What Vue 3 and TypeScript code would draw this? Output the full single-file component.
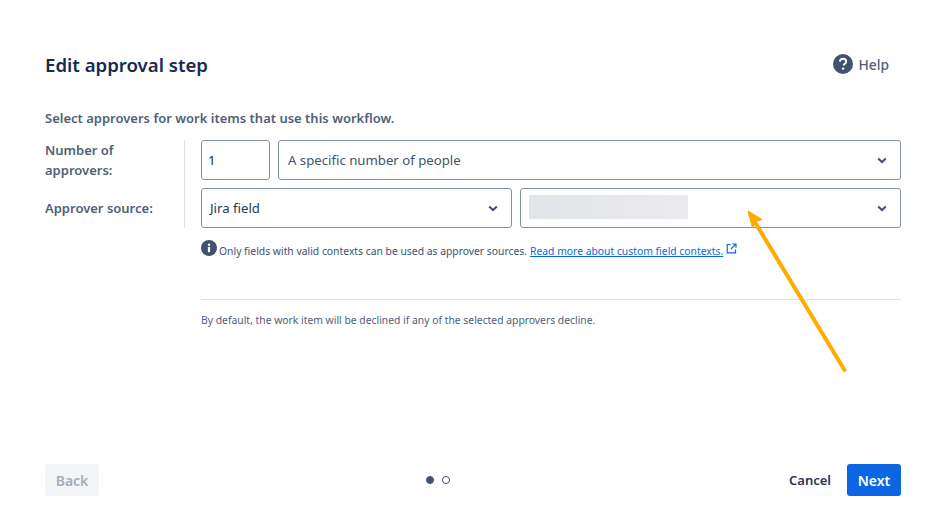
<script setup lang="ts">
const rows = { count: '1', mode: 'A specific number of people', source: 'Jira field' }
</script>

<template>
  <div class="dialog">
    <header class="head">
      <h1 class="title">Edit approval step</h1>
      <a class="help">
        <svg class="help-icon" width="20" height="20" viewBox="0 0 20 20">
          <circle cx="10" cy="10" r="10" fill="#42526e" />
          <path d="M6.9 7.6c.1-1.8 1.4-2.9 3.2-2.9 1.8 0 3.1 1.1 3.1 2.7 0 1.2-.6 1.9-1.6 2.5-.7.5-.9.8-.9 1.5v.2" fill="none" stroke="#fff" stroke-width="1.9" />
          <circle cx="10.1" cy="14.6" r="1.2" fill="#fff" />
        </svg>
        <span>Help</span>
      </a>
    </header>

    <p class="lead">Select approvers for work items that use this workflow.</p>

    <div class="form">
      <div class="labels">
        <div class="label label-first">Number of approvers:</div>
        <div class="label label-second">Approver source:</div>
      </div>
      <div class="fields">
        <div class="row">
          <div class="box number">{{ rows.count }}</div>
          <div class="box select grow">
            <span class="value">{{ rows.mode }}</span>
            <svg class="chevron" width="10" height="7" viewBox="0 0 10 7"><path d="M1.2 1.4 5 5l3.8-3.6" fill="none" stroke="#42526e" stroke-width="2" /></svg>
          </div>
        </div>
        <div class="row">
          <div class="box select source">
            <span class="value value-tight">{{ rows.source }}</span>
            <svg class="chevron" width="10" height="7" viewBox="0 0 10 7"><path d="M1.2 1.4 5 5l3.8-3.6" fill="none" stroke="#42526e" stroke-width="2" /></svg>
          </div>
          <div class="box select grow field-picker">
            <span class="blur"></span>
            <svg class="chevron" width="10" height="7" viewBox="0 0 10 7"><path d="M1.2 1.4 5 5l3.8-3.6" fill="none" stroke="#42526e" stroke-width="2" /></svg>
          </div>
        </div>
      </div>
    </div>

    <div class="notes">
      <div class="hint">
        <svg class="info" width="16" height="16" viewBox="0 0 16 16">
          <circle cx="8" cy="8" r="8" fill="#42526e" />
          <rect x="6.9" y="7" width="2.2" height="5.2" rx=".4" fill="#fff" />
          <circle cx="8" cy="4.8" r="1.25" fill="#fff" />
        </svg>
        <span class="hint-text">Only fields with valid contexts can be used as approver sources.</span>
        <a class="link">Read more about custom field contexts.</a>
        <svg class="external" width="11" height="11" viewBox="0 0 11 11">
          <path d="M4.5 1.5H1.2v8.3h8.3V6.5" fill="none" stroke="#0c66e4" stroke-width="1.2" />
          <path d="M6.2 1H10v3.8M9.8 1.2 5 6" fill="none" stroke="#0c66e4" stroke-width="1.2" />
        </svg>
      </div>
      <p class="default-note">By default, the work item will be declined if any of the selected approvers decline.</p>
    </div>

    <footer class="foot">
      <button class="btn back">Back</button>
      <div class="dots">
        <span class="dot active"></span>
        <span class="dot"></span>
      </div>
      <div class="actions">
        <button class="btn cancel">Cancel</button>
        <button class="btn next">Next</button>
      </div>
    </footer>

    <!-- annotation drawn on top of the screenshot -->
    <svg class="arrow" width="935" height="515" viewBox="0 0 935 515">
      <path d="M844.5 370 750 214" fill="none" stroke="#ffab00" stroke-width="4" stroke-linecap="round" />
      <path d="M748 211 762 219.5 756 221.5 752.5 228Z" fill="#ffab00" stroke="#ffab00" stroke-width="1" stroke-linejoin="round" />
    </svg>
  </div>
</template>

<style scoped>
.dialog {
  position: relative;
  width: 935px;
  height: 515px;
  box-sizing: border-box;
  padding: 0 34px 0 45px;
  display: flex;
  flex-direction: column;
  background: #fff;
  color: #42526e;
  font-family: "Noto Sans", "Open Sans", sans-serif;
  font-size: 14px;
  overflow: hidden;
}

.head {
  display: flex;
  align-items: center;
  justify-content: space-between;
  height: 40px;
  margin-top: 44px;
}

.title {
  margin: 2px 0 0;
  font-size: 18.6px;
  line-height: 28px;
  font-weight: 600;
  color: #172b4d;
}

.help {
  display: flex;
  align-items: center;
  gap: 5px;
  margin-right: 12px;
  font-size: 13.8px;
  font-weight: 500;
  color: #505f79;
}

.help-icon {
  display: block;
}

.lead {
  margin: 24px 0 0;
  font-size: 13px;
  line-height: 20px;
  font-weight: 600;
  color: #505f79;
}

.form {
  display: flex;
  margin-top: 12px;
}

.labels {
  width: 139px;
  height: 88px;
  margin-right: 16px;
  border-right: 1px solid #dfe1e6;
  box-sizing: content-box;
  flex: none;
}

.label {
  font-size: 13px;
  line-height: 20px;
  font-weight: 600;
  color: #505f79;
}

.label-first {
  width: 100px;
  height: 48px;
}

.label-second {
  padding-top: 10px;
  white-space: nowrap;
}

.fields {
  flex: 1;
  display: flex;
  flex-direction: column;
  gap: 8px;
}

.row {
  display: flex;
  gap: 8px;
}

.box {
  height: 40px;
  box-sizing: border-box;
  border: 1px solid #8590a2;
  border-radius: 3px;
  display: flex;
  align-items: center;
  font-size: 13.2px;
  color: #42526e;
  background: #fff;
}

.number {
  width: 69px;
  padding-left: 6px;
  color: #172b4d;
}

.select {
  justify-content: space-between;
  padding: 0 13px 0 9px;
}

.grow {
  flex: 1;
}

.source {
  width: 311px;
  flex: none;
  padding-left: 8px;
}

.value-tight {
  color: #253858;
}

.blur {
  display: block;
  width: 159px;
  height: 24px;
  margin: -2px 0 0 -1px;
  background: linear-gradient(90deg, #e1e4e8, #eaebef);
}

.chevron {
  display: block;
  flex: none;
}

.notes {
  margin-left: 156px;
}

.hint {
  display: flex;
  align-items: center;
  height: 24px;
  margin-top: 11px;
  font-size: 10.35px;
  color: #42526e;
  white-space: nowrap;
}

.info {
  display: block;
  transform: translateY(-3px);
}

.hint-text {
  margin-left: 2px;
}

.link {
  margin-left: 3px;
  color: #0c66e4;
  text-decoration: underline;
}

.external {
  margin-left: 3px;
  transform: translateY(-3px);
}

.default-note {
  margin: 36px 0 0;
  padding-top: 12px;
  border-top: 1px solid #dfe1e6;
  font-size: 10.35px;
  line-height: 16px;
  color: #505f79;
}

.foot {
  position: relative;
  display: flex;
  align-items: center;
  justify-content: space-between;
  margin-top: auto;
  margin-bottom: 19px;
}

.btn {
  height: 32px;
  border: 0;
  border-radius: 3px;
  font-family: inherit;
  font-size: 14px;
  font-weight: 600;
  padding: 0;
  background: none;
}

.back {
  width: 54px;
  background: #f4f5f7;
  color: #a5adba;
}

.dots {
  position: absolute;
  left: 381px;
  top: 12px;
  display: flex;
  gap: 8px;
}

.dot {
  width: 8px;
  height: 8px;
  box-sizing: border-box;
  border: 1px solid #42526e;
  border-radius: 50%;
}

.dot.active {
  background: #42526e;
}

.actions {
  display: flex;
  align-items: center;
  gap: 16px;
}

.cancel {
  width: 42px;
  font-size: 13px;
  color: #253858;
}

.next {
  width: 54px;
  background: #0c66e4;
  color: #fff;
}

.arrow {
  position: absolute;
  left: 0;
  top: 0;
  pointer-events: none;
}
</style>
